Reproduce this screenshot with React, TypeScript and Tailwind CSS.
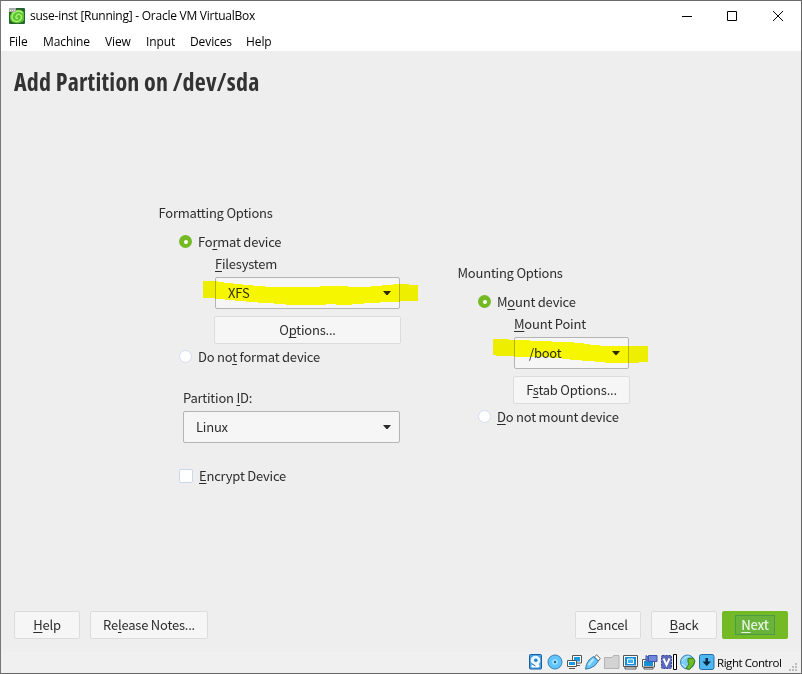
import React from "react";

const K = ({ children }: { children: React.ReactNode }) => (
  <span className="underline decoration-1 underline-offset-2 [text-decoration-skip-ink:none]">{children}</span>
);

const Line = ({ className = "", children }: { className?: string; children: React.ReactNode }) => (
  <div className={`h-5 leading-5 whitespace-pre flex items-center ${className}`}>{children}</div>
);

const Label = ({ children }: { children: React.ReactNode }) => <span className="block h-5 leading-5">{children}</span>;

const Radio = ({ on }: { on?: boolean }) =>
  on ? (
    <span className="w-[13px] h-[13px] rounded-full bg-[#73ba25] flex items-center justify-center shrink-0 -mt-px">
      <span className="w-1 h-1 rounded-full bg-white" />
    </span>
  ) : (
    <span className="w-[13px] h-[13px] rounded-full bg-white border border-[#d5dcee] shrink-0 -mt-px" />
  );

const Combo = ({ text, className }: { text: string; className: string }) => (
  <div className={`h-8 rounded-[2px] border border-[#b4b4b4] bg-[#f6f6f6] flex items-center justify-between pr-2 ${className}`}>
    <Label>{text}</Label>
    <svg width="8" height="4" viewBox="0 0 8 4"><path d="M0 0h8L4.6 4H3.4z" fill="#2b2b2b" /></svg>
  </div>
);

const Btn = ({ className, children }: { className: string; children: React.ReactNode }) => (
  <button className={`h-7 rounded-[2px] border border-[#dcdcdc] bg-[#f6f6f6] flex items-center justify-center whitespace-pre ${className}`}>
    <span className="block h-5 leading-5">{children}</span>
  </button>
);

const Ico = ({ children }: { children: React.ReactNode }) => (
  <svg width="16" height="16" viewBox="0 0 16 16" className="shrink-0">{children}</svg>
);

const StatusIcons = () => (
  <div className="flex gap-[3px]">
    <Ico>
      <rect x="1.500" y=".5" width="12" height="14.500" rx="1" fill="#42a5ea" stroke="#1d5c9e" />
      <circle cx="7.5" cy="6.5" r="4.800" fill="#e8f6ff" />
      <circle cx="7.8" cy="6.300" r="1.800" fill="#2a83ca" />
      <path d="M3.500 13.5v-3l3 1 3-2.500 2.500 3-2 1.500z" fill="#fff" />
      <path d="M3.500 9.500l4 2.500" stroke="#2870ad" />
    </Ico>
    <Ico>
      <circle cx="8" cy="8" r="7" fill="#5ec6fd" stroke="#3b7eb4" />
      <circle cx="8" cy="8" r="2.8" fill="#a6e2ff" />
      <circle cx="8" cy="8" r="1.2" fill="#15639c" />
    </Ico>
    <Ico>
      <path d="M6.5 1.5h9v7.500h-9zM9 11.500h5" fill="#fff" stroke="#555" />
      <path d="M8 3h6v4.500H8z" fill="#189be4" />
      <path d="M1.5 6.500h9v6h-9zM3 14.500h6" fill="#fff" stroke="#555" />
      <path d="M3 8h6v3H3z" fill="#189be4" />
    </Ico>
    <Ico>
      <path d="M9.500 3l2-2.200 3.800 3.700-2 2.500z" fill="#fff" stroke="#666" />
      <path d="M8.500 2.500l4.800 4.500-3.300 4.500-4.500 2.500-5 1.200 1-4.700L4 6z" fill="#66c7f8" stroke="#3978a8" />
      <path d="M8.500 5L3.500 11" stroke="#b4e8ff" strokeWidth="2" />
    </Ico>
    <Ico>
      <path d="M.5 3.500h7.500l1.500-2h5.500v13H.5z" fill="#d3d3d3" stroke="#b3b3b3" />
    </Ico>
    <Ico>
      <path d="M.5 1.5h14v11h-14zM2 15h11v-2H2z" fill="#fff" stroke="#555" />
      <path d="M2 3h11v8.500H2z" fill="#168fdb" />
      <path d="M4.500 5h6v4.500h-6z" fill="#39b3f0" stroke="#fff" />
    </Ico>
    <Ico>
      <path d="M.5 5.500h12v7.500H.5zM2 15h9v-1.500H2z" fill="#fff" stroke="#555" />
      <path d="M2 7h9v5H2z" fill="#168fdb" />
      <path d="M6.500 1.500h8.500v6h-8.500zM6 3L4 1.500v6L6 6z" fill="#6e88dc" stroke="#3f55aa" />
    </Ico>
    <Ico>
      <rect x=".5" y="1.500" width="10" height="13" rx="1" fill="#5968bd" stroke="#38458f" strokeDasharray="2 1" />
      <path d="M2.500 4.500l3 6.500 3-6.500" fill="none" stroke="#fff" strokeWidth="1.900" />
      <path d="M12.500.5h3v15h-3z" fill="#fff" stroke="#000" />
    </Ico>
    <Ico>
      <circle cx="7.500" cy="8" r="7" fill="#79cdf6" stroke="#3e82b4" />
      <path d="M2 7c3-4 5-4 7-5M2 10c2 1 3 3 5 4" stroke="#d2f3ff" fill="none" />
      <path d="M8 4.500l5-.5 2 3-1.500 3.500-4 5-3.500-1 3-4.500-1-2z" fill="#6cbd26" stroke="#39781a" />
    </Ico>
    <Ico>
      <rect x=".5" y=".5" width="14.500" height="15" rx="2" fill="#4eb7ef" stroke="#276da5" />
      <path d="M6.500 4h2.500v3.500H12L7.700 12 3.500 7.500h3z" fill="#07263f" />
    </Ico>
  </div>
);

export default function App() {
  return (
    <div className="relative w-[802px] h-[674px] overflow-hidden flex flex-col bg-white border border-t-[#6a6a6a] border-l-[#777] border-r-[#666] border-b-[#666] font-['Noto_Sans_CJK_SC',sans-serif] text-[13px] tracking-[-0.22px] text-[#2d2d2d]">
      <div className="h-[29px] shrink-0 flex items-center text-black font-['Open_Sans',sans-serif] text-[12px]">
        <svg width="16" height="16" viewBox="0 0 16 16" className="ml-2">
          <rect width="16" height="16" rx="1" fill="#27632b" />
          <path d="M3 4C7 1 13 1 15 5v7c-2 4-10 4-13 1C0 10 1 6 3 4" fill="#58c52e" />
          <path d="M14 5C10 1 3 4 3 9s7 6 9 2-2-6-4-4-1 4 1 3" fill="none" stroke="#b0f077" strokeWidth="1.400" />
          <rect width="7" height="4" fill="#aaa" />
          <path d="M1 2.500h5" stroke="#eee" strokeDasharray="1 1" />
        </svg>
        <span className="ml-[5px] grow tracking-[-0.25px]">suse-inst [Running] - Oracle VM VirtualBox</span>
        <svg width="120" height="16" viewBox="681 7 120 16" fill="none" stroke="#000">
          <path d="M682 15.500h10M727.500 10.500h9v9h-9zM773 10l10 10M783 10l-10 10" />
        </svg>
      </div>
      <div className="h-[21px] shrink-0 flex items-center pl-2 pt-0.5 text-black font-['Open_Sans',sans-serif] text-[12px] tracking-[-0.1px]">
        <span className="w-[34px]">File</span>
        <span className="w-[62px]">Machine</span>
        <span className="w-[41px]">View</span>
        <span className="w-[44px]">Input</span>
        <span className="w-[56px]">Devices</span>
        <span>Help</span>
      </div>
      <div className="h-[601px] shrink-0 bg-[#eee] flex flex-col">
        <h1 className="h-[64px] leading-[62px] pl-[13px] font-['Open_Sans',sans-serif] font-bold text-[24px] tracking-[0.21px] [font-stretch:75%] text-[#333]">Add Partition on /dev/sda</h1>
        <div className="flex pl-[157.500px] pt-[88px] h-[496px]">
          <section className="w-[299px]">
            <Line>Formatting Options</Line>
            <Line className="mt-[9px] pl-[20.500px] gap-1.5"><Radio on /><Label>Fo<K>r</K>mat device</Label></Line>
            <Line className="mt-0.5 pl-[56.500px]"><Label><K>F</K>ilesystem</Label></Line>
            <Combo text="XFS" className="mt-[3px] ml-[56.500px] w-[185px] pl-3" />
            <Btn className="mt-[7px] ml-[55.500px] w-[187px]">O<K>p</K>tions...</Btn>
            <Line className="mt-[3px] pl-[20.500px] gap-1.5"><Radio /><Label>Do no<K>t</K> format device</Label></Line>
            <Line className="mt-[21px] pl-[24.500px]"><Label>Partition <K>I</K>D:</Label></Line>
            <Combo text="Linux" className="mt-[3px] ml-[24.500px] w-[217px] pl-3" />
            <Line className="mt-[23px] pl-[20.500px] gap-1.5">
              <span className="w-3.5 h-3.5 rounded-[2px] bg-white border border-[#cbd7ea]" />
              <Label><K>E</K>ncrypt Device</Label>
            </Line>
          </section>
          <section className="pt-[60px]">
            <Line>Mounting Options</Line>
            <Line className="mt-[9px] pl-[20.500px] gap-1.5"><Radio on /><Label>M<K>o</K>unt device</Label></Line>
            <Line className="mt-0.5 pl-[56.500px]"><Label><K>M</K>ount Point</Label></Line>
            <Combo text="/boot" className="mt-[3px] ml-[56.500px] w-[115px] pl-3.5" />
            <Btn className="mt-[7px] ml-[55.500px] w-[117px]">F<K>s</K>tab Options...</Btn>
            <Line className="mt-[3px] pl-[20.500px] gap-1.5"><Radio /><Label><K>D</K>o not mount device</Label></Line>
          </section>
        </div>
        <div className="flex px-[13px]">
          <Btn className="w-[66px]"><K>H</K>elp</Btn>
          <Btn className="ml-2.5 w-[118px]">Re<K>l</K>ease Notes...</Btn>
          <Btn className="ml-auto w-[66px]"><K>C</K>ancel</Btn>
          <Btn className="ml-2.5 w-[66px]"><K>B</K>ack</Btn>
          <button className="ml-[5px] w-[66px] h-7 rounded-[2px] bg-[#73ba25] flex items-center justify-center text-[#e6f3e0]">
            <span className="w-10 h-5 leading-[18px] border border-[#4c9a4a] bg-[#69b33a] font-medium"><K>N</K>ext</span>
          </button>
        </div>
      </div>
      <div className="h-[21px] shrink-0 bg-[#f0f0f0] flex pl-[527px] pt-[2px] text-black font-['Open_Sans',sans-serif] text-[12px]">
        <StatusIcons />
        <span className="ml-0.5 w-[72px] h-4 leading-[17px] whitespace-nowrap text-[11.500px] tracking-[-0.45px]">Right Control</span>
        <svg width="8" height="8" viewBox="0 0 8 8" fill="#bcbcbc" className="mt-[9px] shrink-0">
          <path d="M6 0h2v2H6zM3 3h2v2H3zM6 3h2v2H6zM0 6h2v2H0zM3 6h2v2H3zM6 6h2v2H6z" />
        </svg>
      </div>
      <svg className="absolute left-[-1px] top-[-1px] mix-blend-multiply pointer-events-none" width="802" height="674" fill="#ff0">
        <path d="M0 0h216v1H0zM0 1h1v38H0z" fill="#444349" />
        <path d="M0 39h1v68H0z" fill="#5f8790" />
        <path d="M203 281h15v1h6v1h9v1h10v1h10v1h12v1h55v-1h28v1h23v-1h11v-1h11v-1h16v1h9v16h-18v1h-20v1h-16v1h-12v1h-16v-1h-10v1h-40v-1h-12v-1h-16v-1h-12v-1h-11v-1h-10v-1h-10v-1h-12z" />
        <path d="M493 339h16v1h21v1h22v1h22v1h10v1h6v1h10v1h48v16h-9v1h-34v-1h-10v-1h-13v-1h-12v-1h-8v-1h-12v-1h-36v-1h-18v-1h-3z" />
      </svg>
    </div>
  );
}
